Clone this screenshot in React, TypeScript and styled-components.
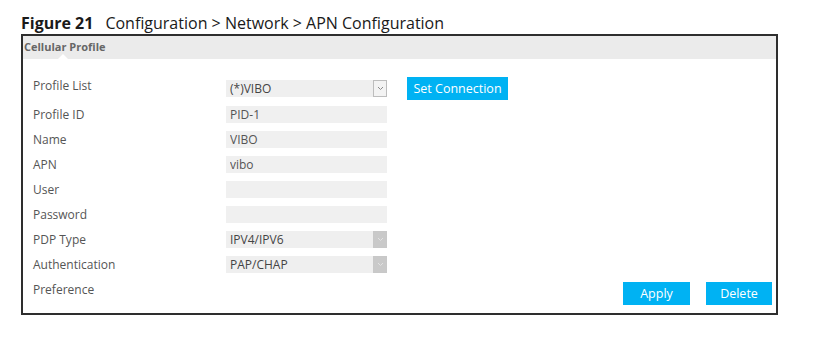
import React from "react";
import styled, { createGlobalStyle } from "styled-components";

const GlobalStyle = createGlobalStyle`
    body {
        margin: 0;
        background: #ffffff;
        font-family: "Open Sans", "Liberation Sans", sans-serif;
    }
`;

const Page = styled.div`
    padding: 12px 0 0 21px;
`;

const Title = styled.div`
    font-size: 16px;
    line-height: 22px;
    color: #1a1a1a;
    white-space: nowrap;
`;

const FigureNo = styled.span`
    font-weight: 700;
    margin-right: 12px;
`;

const Panel = styled.div`
    width: 757px;
    box-sizing: border-box;
    border: 2px solid #2e2e2e;
`;

const PanelHeader = styled.div`
    position: relative;
    height: 23px;
    line-height: 22px;
    padding-left: 1px;
    background: #ebebeb;
    color: #666666;
    font-size: 11px;
    font-weight: 700;

    &::after {
        content: "";
        position: absolute;
        left: 35px;
        bottom: 0;
        border-left: 5px solid transparent;
        border-right: 5px solid transparent;
        border-bottom: 5px solid #ffffff;
    }
`;

const Form = styled.div`
    padding: 15px 4px 8px 10px;
`;

const Row = styled.div<{ $height?: number; $align?: string }>`
    display: flex;
    align-items: ${(p) => p.$align || "center"};
    height: ${(p) => p.$height || 25}px;
`;

const Label = styled.div<{ $shift?: number }>`
    width: 193px;
    font-size: 12px;
    line-height: 25px;
    color: #555555;
    margin-top: ${(p) => p.$shift || 0}px;
`;

const TextField = styled.input`
    width: 161px;
    height: 17px;
    box-sizing: border-box;
    padding: 0 4px;
    border: none;
    outline: none;
    background: #f0f0f0;
    font-family: inherit;
    font-size: 12px;
    color: #555555;
`;

const SelectBox = styled.div`
    display: flex;
    align-items: stretch;
    width: 161px;
    height: 17px;
    background: #efefef;
`;

const SelectValue = styled.span`
    flex: 1;
    padding-left: 4px;
    font-size: 12px;
    line-height: 17px;
    color: #444444;
`;

const SelectArrow = styled.span<{ $disabled?: boolean }>`
    display: flex;
    align-items: center;
    justify-content: center;
    width: 14px;
    box-sizing: border-box;
    border: 1px solid ${(p) => (p.$disabled ? "#c8c8c8" : "#bdbdbd")};
    background: ${(p) => (p.$disabled ? "#c9c9c9" : "#f3f3f3")};
`;

const BlueButton = styled.button<{ $width: number }>`
    width: ${(p) => p.$width}px;
    height: 23px;
    padding: 0;
    border: none;
    background: #00b2f3;
    color: #ffffff;
    font-family: inherit;
    font-size: 12.5px;
    cursor: pointer;
`;

const SideButton = styled(BlueButton)`
    margin-left: 20px;
`;

const Actions = styled.div`
    display: flex;
    gap: 16px;
    margin-left: auto;
    margin-top: 5px;
`;

const Chevron = ({ disabled }: { disabled?: boolean }) => (
    <svg width="7" height="5" viewBox="0 0 7 5">
        <path
            d="M1 1 L3.5 3.5 L6 1"
            fill="none"
            stroke={disabled ? "#e2e2e2" : "#8a8a8a"}
            strokeWidth="1"
        />
    </svg>
);

type SelectProps = {
    value: string;
    disabled?: boolean;
};

const Select = ({ value, disabled }: SelectProps) => (
    <SelectBox>
        <SelectValue>{value}</SelectValue>
        <SelectArrow $disabled={disabled}>
            <Chevron disabled={disabled} />
        </SelectArrow>
    </SelectBox>
);

const fields = [
    { label: "Profile ID", value: "PID-1" },
    { label: "Name", value: "VIBO" },
    { label: "APN", value: "vibo" },
    { label: "User", value: "" },
    { label: "Password", value: "" },
];

const App = () => {
    return (
        <Page>
            <GlobalStyle />
            <Title>
                <FigureNo>Figure 21</FigureNo>
                Configuration &gt; Network &gt; APN Configuration
            </Title>
            <Panel>
                <PanelHeader>Cellular Profile</PanelHeader>
                <Form>
                    <Row $height={28}>
                        <Label $shift={-5}>Profile List</Label>
                        <Select value="(*)VIBO" />
                        <SideButton $width={101}>Set Connection</SideButton>
                    </Row>
                    {fields.map((f) => (
                        <Row key={f.label}>
                            <Label>{f.label}</Label>
                            <TextField
                                readOnly
                                value={f.value}
                                type={f.label === "Password" ? "password" : "text"}
                            />
                        </Row>
                    ))}
                    <Row>
                        <Label>PDP Type</Label>
                        <Select value="IPV4/IPV6" disabled />
                    </Row>
                    <Row>
                        <Label>Authentication</Label>
                        <Select value="PAP/CHAP" disabled />
                    </Row>
                    <Row $height={28} $align="flex-start">
                        <Label>Preference</Label>
                        <Actions>
                            <BlueButton $width={67}>Apply</BlueButton>
                            <BlueButton $width={66}>Delete</BlueButton>
                        </Actions>
                    </Row>
                </Form>
            </Panel>
        </Page>
    );
};

export default App;
